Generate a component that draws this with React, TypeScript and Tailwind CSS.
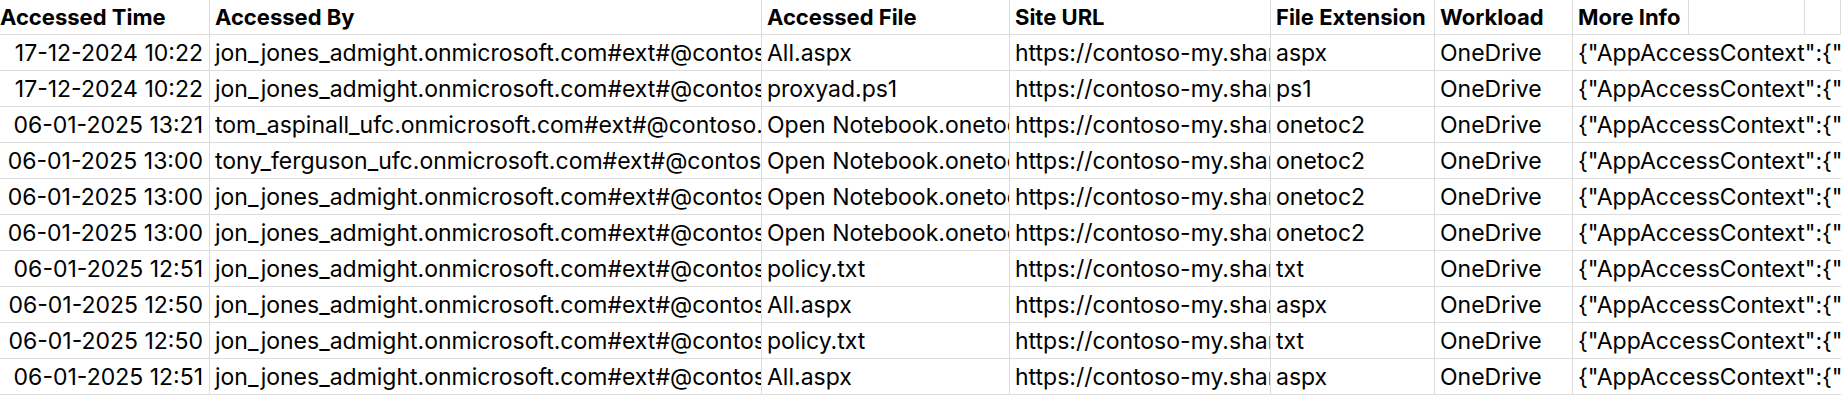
import React from "react";

type Row = {
  time: string;
  by: string;
  file: string;
  ext: string;
  info: string;
};

const SITE = "https://contoso-my.sharepoint.com/personal/admin_contoso_onmicrosoft_com";
const INFO_A =
  '{"AppAccessContext":{"AADSessionId":"00b4c6a2-59b1-4d2e-9a55-2c3f0b6a1d77","CorrelationId":"a1f3e9c0"}}';
const INFO_C =
  '{"AppAccessContext":{"ClientAppId":"d3590ed6-52b3-4102-aeff-aad2292ab01c","CorrelationId":"b2e4d8f1"}}';

const JJ = "jon_jones_admight.onmicrosoft.com#ext#@contoso.onmicrosoft.com";

const rows: Row[] = [
  { time: "17-12-2024 10:22", by: JJ, file: "All.aspx", ext: "aspx", info: INFO_A },
  { time: "17-12-2024 10:22", by: JJ, file: "proxyad.ps1", ext: "ps1", info: INFO_A },
  {
    time: "06-01-2025 13:21",
    by: "tom_aspinall_ufc.onmicrosoft.com#ext#@contoso.onmicrosoft.com",
    file: "Open Notebook.onetoc2",
    ext: "onetoc2",
    info: INFO_C,
  },
  {
    time: "06-01-2025 13:00",
    by: "tony_ferguson_ufc.onmicrosoft.com#ext#@contoso.onmicrosoft.com",
    file: "Open Notebook.onetoc2",
    ext: "onetoc2",
    info: INFO_C,
  },
  { time: "06-01-2025 13:00", by: JJ, file: "Open Notebook.onetoc2", ext: "onetoc2", info: INFO_C },
  { time: "06-01-2025 13:00", by: JJ, file: "Open Notebook.onetoc2", ext: "onetoc2", info: INFO_C },
  { time: "06-01-2025 12:51", by: JJ, file: "policy.txt", ext: "txt", info: INFO_A },
  { time: "06-01-2025 12:50", by: JJ, file: "All.aspx", ext: "aspx", info: INFO_A },
  { time: "06-01-2025 12:50", by: JJ, file: "policy.txt", ext: "txt", info: INFO_C },
  { time: "06-01-2025 12:51", by: JJ, file: "All.aspx", ext: "aspx", info: INFO_A },
];

// column widths incl. the 1px gridline on the right
const COLS = "grid-cols-[210px_552px_248px_261px_164px_138px_116px_116px_1fr]";

const cell = "overflow-hidden whitespace-nowrap border-r border-b border-[#dcdcdc]";

export default function App() {
  return (
    <div
      className="w-[1841px] h-[395px] overflow-hidden bg-white text-black"
      style={{ fontFamily: "Inter, 'Liberation Sans', sans-serif" }}
    >
      {/* header row */}
      <div className={`grid ${COLS} h-[35px] text-[22px] font-bold leading-[34px]`}>
        <div className={`${cell} pl-0`}>Accessed Time</div>
        <div className={`${cell} pl-[5px]`}>Accessed By</div>
        <div className={`${cell} pl-[5px]`}>Accessed File</div>
        <div className={`${cell} pl-[5px]`}>Site URL</div>
        <div className={`${cell} pl-[5px]`}>File Extension</div>
        <div className={`${cell} pl-[5px]`}>Workload</div>
        <div className={`${cell} pl-[5px]`}>More Info</div>
        <div className={cell}></div>
        <div className={cell}></div>
      </div>

      {rows.map((r, i) => (
        <div key={i} className={`grid ${COLS} h-[36px] text-[23px] leading-[36px]`}>
          <div className={`${cell} pr-[6px] text-right`}>{r.time}</div>
          <div className={`${cell} pl-[5px]`}>{r.by}</div>
          <div className={`${cell} pl-[5px]`}>{r.file}</div>
          <div className={`${cell} pl-[5px]`}>{SITE}</div>
          <div className={`${cell} pl-[5px]`}>{r.ext}</div>
          <div className={`${cell} pl-[5px]`}>OneDrive</div>
          {/* last cell overflows across the empty columns to its right */}
          <div className="col-span-3 overflow-hidden whitespace-nowrap border-b border-[#dcdcdc] pl-[5px]">
            {r.info}
          </div>
        </div>
      ))}
    </div>
  );
}
